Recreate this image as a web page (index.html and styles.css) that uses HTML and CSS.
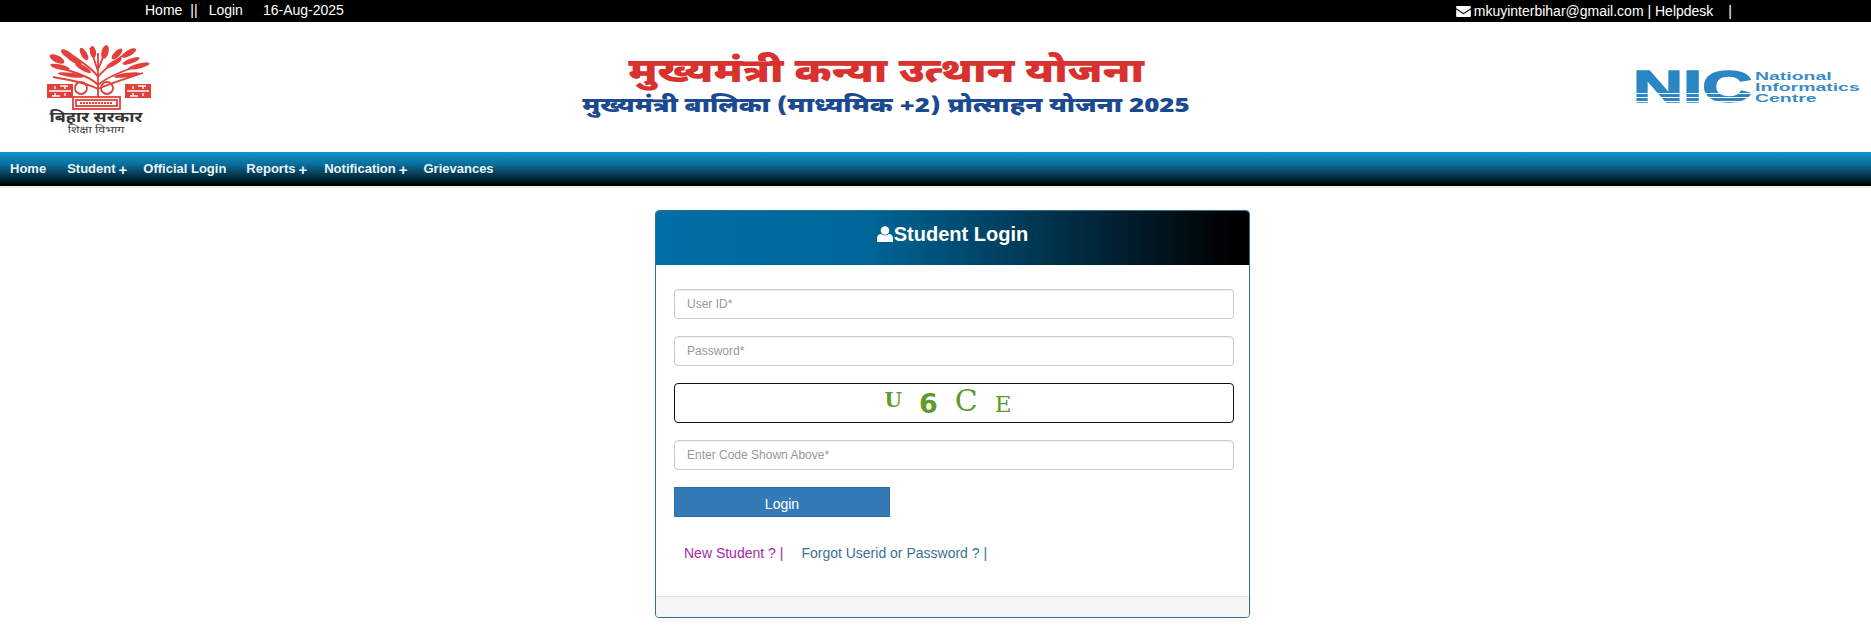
FILE: index.html
```html
<!DOCTYPE html>
<html lang="hi">
<head>
  <meta charset="UTF-8">
  <meta name="viewport" content="width=device-width, initial-scale=1.0">
  <title>Student Login</title>
  <link rel="stylesheet" href="styles.css">
</head>
<body>
  <div class="topbar">
    <div class="top-left">
      <a class="top-home">Home</a>
      <span class="top-sep">||</span>
      <a class="top-login">Login</a>
      <span>16-Aug-2025</span>
    </div>
    <div class="top-right">
      <svg class="mail" viewBox="0 0 16 12"><path d="M0 2.400V1.200C0 .5.5 0 1.200 0h13.600c.7 0 1.200.5 1.200 1.200v1.200L8 7.600z"/><path d="M0 3.900V10.800c0 .7.5 1.200 1.200 1.200h13.600c.7 0 1.200-.5 1.200-1.200V3.900L8 9.100z"/></svg>
      <span>mkuyinterbihar@gmail.com | Helpdesk</span>
      <span class="top-bar-end">|</span>
    </div>
  </div>

  <header class="masthead">
    <div class="emblem">
      <svg class="emblem-art" viewBox="0 0 104 65">
        <g class="tree-lines">
          <path d="M51 52V8M51 40C44 32 30 27 8 22M51 40C60 32 74 26 100 18M51 32C46 24 36 18 22 8M51 32C57 24 66 18 82 6M51 26C48 18 46 10 43 3M51 24C55 16 57 9 60 1M51 44C40 38 24 35 6 32M51 44C64 38 78 34 96 28"/>
        </g>
        <g class="tree-leaves">
          <ellipse cx="10" cy="14" rx="8" ry="3.500" transform="rotate(25 10 14)"/>
          <ellipse cx="20" cy="9" rx="7" ry="3" transform="rotate(35 20 9)"/>
          <ellipse cx="13" cy="22" rx="10" ry="2.500" transform="rotate(12 13 22)"/>
          <ellipse cx="27" cy="15" rx="9" ry="2.500" transform="rotate(30 27 15)"/>
          <ellipse cx="24" cy="30" rx="13" ry="2.200" transform="rotate(8 24 30)"/>
          <ellipse cx="37" cy="9" rx="7" ry="3" transform="rotate(60 37 9)"/>
          <ellipse cx="36" cy="23" rx="9" ry="2.500" transform="rotate(30 36 23)"/>
          <ellipse cx="46" cy="7" rx="6" ry="3" transform="rotate(80 46 7)"/>
          <ellipse cx="58" cy="7" rx="7" ry="3.500" transform="rotate(-75 58 7)"/>
          <ellipse cx="67" cy="18" rx="9" ry="2.500" transform="rotate(-32 67 18)"/>
          <ellipse cx="70" cy="9" rx="7" ry="3" transform="rotate(-45 70 9)"/>
          <ellipse cx="82" cy="8" rx="8" ry="3" transform="rotate(-30 82 8)"/>
          <ellipse cx="84" cy="16" rx="9" ry="2.500" transform="rotate(-20 84 16)"/>
          <ellipse cx="92" cy="21" rx="11" ry="2.500" transform="rotate(-14 92 21)"/>
          <ellipse cx="80" cy="30" rx="13" ry="2.200" transform="rotate(-8 80 30)"/>
        </g>
        <g class="tree-lines">
          <circle cx="34" cy="43" r="6"/>
          <circle cx="60" cy="43" r="6"/>
          <rect x="26" y="52" width="47" height="12"/>
          <rect x="29" y="55" width="41" height="6"/>
          <path d="M33 58H66" stroke-dasharray="2 1"/>
        </g>
        <rect class="tree-leaves" x="0" y="39" width="26" height="14"/>
        <rect class="tree-leaves" x="78" y="39" width="26" height="14"/>
        <path class="tree-gaps" d="M2 46H24M8 41V44M8 48V51M18 41V44M18 48V51M13 41H21M5 51H13M80 46H102M86 41V44M86 48V51M96 41V44M96 48V51M91 41H99M83 51H91"/>
      </svg>
      <div class="emblem-name">बिहार सरकार</div>
      <div class="emblem-dept">शिक्षा विभाग</div>
    </div>
    <div class="scheme">
      <h1 class="scheme-title">मुख्यमंत्री कन्या उत्थान योजना</h1>
      <h2 class="scheme-sub">मुख्यमंत्री बालिका (माध्यमिक +2) प्रोत्साहन योजना 2025</h2>
    </div>
    <div class="nic">
      <div class="nic-mark"><span class="nic-letters">NIC</span></div>
      <div class="nic-name">National<br>Informatics<br>Centre</div>
    </div>
  </header>

  <nav class="mainnav">
    <a class="nav-home">Home</a>
    <a class="nav-student">Student<span class="plus">+</span></a>
    <a class="nav-official">Official Login</a>
    <a class="nav-reports">Reports<span class="plus">+</span></a>
    <a class="nav-notif">Notification<span class="plus">+</span></a>
    <a>Grievances</a>
  </nav>

  <main class="content">
    <section class="login-panel">
      <div class="panel-head">
        <svg class="user-icon" viewBox="0 0 16 16"><circle cx="8" cy="4.500" r="4.300"/><path d="M0 16v-3.500C0 9.500 2 8 4 7.800 5 8.800 6.400 9.300 8 9.300s3-.5 4-1.500c2 .2 4 1.700 4 4.700V16z"/></svg>
        <span>Student Login</span>
      </div>
      <form class="panel-body">
        <input class="field" type="text" placeholder="User ID*">
        <input class="field" type="password" placeholder="Password*">
        <div class="captcha">
          <span class="cap-u">U</span>
          <span class="cap-6">6</span>
          <span class="cap-c">C</span>
          <span class="cap-e">E</span>
        </div>
        <input class="field" type="text" placeholder="Enter Code Shown Above*">
        <button class="login-btn" type="button">Login</button>
        <div class="panel-links">
          <a class="link-new">New Student ? |</a>
          <a class="link-forgot">Forgot Userid or Password ? |</a>
        </div>
      </form>
      <div class="panel-foot"></div>
    </section>
  </main>
</body>
</html>
```

FILE: styles.css
```css
* { box-sizing: border-box; }
body { margin: 0; background: #fff; font-family: "Liberation Sans", Arial, sans-serif; color: #333; }

.topbar { height: 22px; background: #000; color: #fff; font-size: 14px; line-height: 20px; display: flex; justify-content: space-between; }
.top-left { padding-left: 145px; display: flex; }
.top-sep { margin: 0 11px 0 8px; }
.top-login { margin-right: 20px; }
.top-right { padding-right: 139px; display: flex; align-items: center; }
.mail { width: 15px; height: 11px; fill: #fff; margin-right: 3px; }
.top-bar-end { margin-left: 15px; }

.masthead { height: 130px; display: grid; grid-template-columns: 230px 1fr 329px; }
.emblem { padding: 23px 0 0 47px; width: 230px; }
.emblem-art { width: 104px; height: 65px; display: block; }
.tree-lines { fill: none; stroke: #e2403a; stroke-width: 1.800; }
.tree-leaves { fill: #e2403a; }
.tree-gaps { fill: none; stroke: #fff; stroke-width: 1.300; }
.emblem-name { width: 98px; margin-top: 2px; text-align: center; font: bold 14px/14px "Noto Sans Devanagari", "Noto Sans", sans-serif; color: #333; transform: scaleX(1.270); }
.emblem-dept { width: 98px; text-align: center; font: 10px/10px "Noto Sans Devanagari", "Noto Sans", sans-serif; color: #444; transform: scaleX(1.250); }

.scheme { display: flex; flex-direction: column; align-items: center; padding-top: 33px; }
.scheme-title { margin: 0; font: 900 33px/38px "Noto Sans Devanagari", "Noto Sans", sans-serif; color: #d8312e; transform: scaleX(1.295); }
.scheme-sub { margin: 0; font: 900 20px/29px "Noto Sans Devanagari", "Noto Sans", sans-serif; color: #1c4a90; transform: scaleX(1.315); }

.nic { display: flex; justify-content: flex-end; align-items: flex-start; padding: 40px 11px 0 0; }
.nic-mark { position: relative; width: 119px; height: 50px; line-height: 50px; overflow: hidden; }
.nic-letters { display: block; transform-origin: left; transform: scaleX(1.540); font: bold 45px/50px "Liberation Sans", Arial, sans-serif; color: #2a86c4; -webkit-text-stroke: 1.500px #2a86c4; white-space: nowrap; }
.nic-mark::after { content: ""; position: absolute; left: 0; right: 0; top: 28px; height: 16px; background: repeating-linear-gradient(transparent 0 3px, #fff 3px 4px); }
.nic-name { width: 105px; margin: 9px 0 0 3px; font: bold 10.500px/11px "Liberation Sans", Arial, sans-serif; color: #3a8cc6; transform-origin: left; transform: scaleX(1.850); white-space: nowrap; }

.mainnav { height: 34px; display: flex; align-items: baseline; padding: 9px 0 0 10px; background: linear-gradient(#1195d0, #0a6f9d 35%, #000); color: #e8f4fa; font-size: 13px; font-weight: bold; }
.nav-home { margin-right: 21px; }
.nav-student { margin-right: 16px; }
.nav-official { margin-right: 20px; }
.nav-reports { margin-right: 17px; }
.nav-notif { margin-right: 16px; }
.plus { margin-left: 3px; font-size: 15px; vertical-align: -2px; }

.content { border-top: 2px solid #eee; padding: 22px 0 0 655px; }
.login-panel { width: 595px; height: 408px; border: 1px solid #2e6f8e; border-radius: 4px; display: flex; flex-direction: column; background: #fff; box-shadow: 0 1px 2px rgba(0,0,0,.05); }
.panel-head { height: 54px; flex: none; display: flex; justify-content: center; align-items: center; padding-bottom: 8px; gap: 1px; background: linear-gradient(to right, #006fa6, #00679a 35%, #000 97%); color: #fff; font-size: 20px; font-weight: bold; border-radius: 3px 3px 0 0; }
.user-icon { width: 16px; height: 18px; fill: #fff; }

.panel-body { flex: 1; padding: 24px 15px 0 18px; display: flex; flex-direction: column; }
.field { width: 560px; height: 30px; flex: none; padding: 0 12px; margin-bottom: 17px; border: 1px solid #ccc; border-radius: 4px; font: 12px "Liberation Sans", Arial, sans-serif; box-shadow: inset 0 1px 1px rgba(0,0,0,.075); }
.field::placeholder { color: #999; }

.captcha { width: 560px; height: 40px; flex: none; margin-bottom: 17px; padding: 0 12px 2px 0; border: 1px solid #111; border-radius: 4px; display: flex; justify-content: center; align-items: center; gap: 17px; font-family: "DejaVu Serif", "Liberation Serif", serif; color: #5f9a2a; }
.cap-u { font-size: 20px; font-weight: bold; margin-bottom: 5px; }
.cap-6 { font-size: 27px; font-weight: bold; font-family: "DejaVu Sans", sans-serif; margin-top: 2px; }
.cap-c { font-size: 30px; margin-bottom: 3px; }
.cap-e { font-size: 23px; margin-top: 3px; }

.login-btn { width: 216px; height: 30px; flex: none; border: 1px solid #2e6da4; background: #337ab7; color: #fff; font: 14px "Liberation Sans", Arial, sans-serif; padding: 3px 0 0; }

.panel-links { display: flex; padding: 26px 0 0 10px; font-size: 14px; line-height: 20px; }
.link-new { color: #a62aa6; margin-right: 18px; }
.link-forgot { color: #3a7290; }

.panel-foot { height: 21px; flex: none; background: #f5f5f5; border-top: 1px solid #ddd; border-radius: 0 0 3px 3px; }
```
